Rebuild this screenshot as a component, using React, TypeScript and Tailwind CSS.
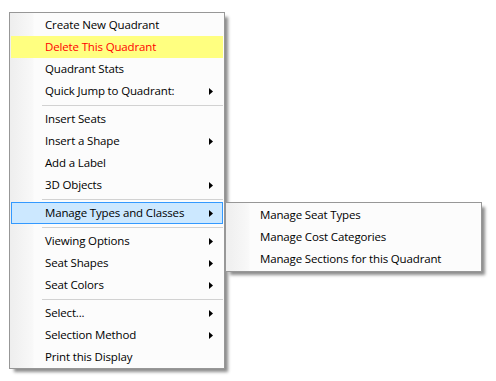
import React from "react";

type Item =
  | { type: "sep" }
  | { type: "item"; label: string; sub?: boolean; state?: "yellow" | "blue" };

const items: Item[] = [
  { type: "item", label: "Create New Quadrant" },
  { type: "item", label: "Delete This Quadrant", state: "yellow" },
  { type: "item", label: "Quadrant Stats" },
  { type: "item", label: "Quick Jump to Quadrant:", sub: true },
  { type: "sep" },
  { type: "item", label: "Insert Seats" },
  { type: "item", label: "Insert a Shape", sub: true },
  { type: "item", label: "Add a Label" },
  { type: "item", label: "3D Objects", sub: true },
  { type: "sep" },
  { type: "item", label: "Manage Types and Classes", sub: true, state: "blue" },
  { type: "sep" },
  { type: "item", label: "Viewing Options", sub: true },
  { type: "item", label: "Seat Shapes", sub: true },
  { type: "item", label: "Seat Colors", sub: true },
  { type: "sep" },
  { type: "item", label: "Select...", sub: true },
  { type: "item", label: "Selection Method", sub: true },
  { type: "item", label: "Print this Display" },
];

const Arrow = () => (
  <svg width="4" height="7" viewBox="0 0 4 7" className="block">
    <polygon points="0,0 4,3.5 0,7" fill="#000" />
  </svg>
);

const menuBox =
  "border border-[#979797] p-[1px] bg-[linear-gradient(to_right,#eeeeee_0px,#f7f7f7_20px,#f9f9f9_23px,#fcfcfc_24px,#fcfcfc_100%)] shadow-[4px_4px_3px_-1px_rgba(0,0,0,0.45)]";

function SubMenu() {
  const subs = [
    "Manage Seat Types",
    "Manage Cost Categories",
    "Manage Sections for this Quadrant",
  ];
  return (
    <div className={`absolute left-[214px] top-0 w-[257px] z-10 ${menuBox}`}>
      {subs.map((s) => (
        <div key={s} className="h-[22px] flex items-center pl-[33px] text-black whitespace-nowrap">
          {s}
        </div>
      ))}
    </div>
  );
}

export default function App() {
  return (
    <div
      className="w-[496px] h-[381px] bg-white pt-[12px] pl-[9px] text-[11.5px] tracking-[-0.15px] leading-none"
      style={{ fontFamily: '"Open Sans", "Noto Sans", sans-serif' }}
    >
      <div className={`w-[216px] pt-[1px] pb-0 ${menuBox}`}>
        {items.map((it, i) => {
          if (it.type === "sep")
            return (
              <div key={i} className="h-[6px] pt-[3px] pl-[31px]">
                <div className="h-[1px] bg-[#d2d2d2]" />
              </div>
            );
          const base =
            "relative h-[22px] flex items-center justify-between pl-[34px] pr-[10px] whitespace-nowrap";
          const st =
            it.state === "yellow"
              ? "bg-[#ffff80] text-[#ff0000]"
              : it.state === "blue"
              ? "bg-[#cce8ff] outline outline-1 -outline-offset-1 outline-[#3399ff] text-black"
              : "text-black";
          return (
            <div key={i} className={`${base} ${st}`}>
              <span>{it.label}</span>
              {it.sub && <Arrow />}
              {it.state === "blue" && <SubMenu />}
            </div>
          );
        })}
      </div>
    </div>
  );
}
